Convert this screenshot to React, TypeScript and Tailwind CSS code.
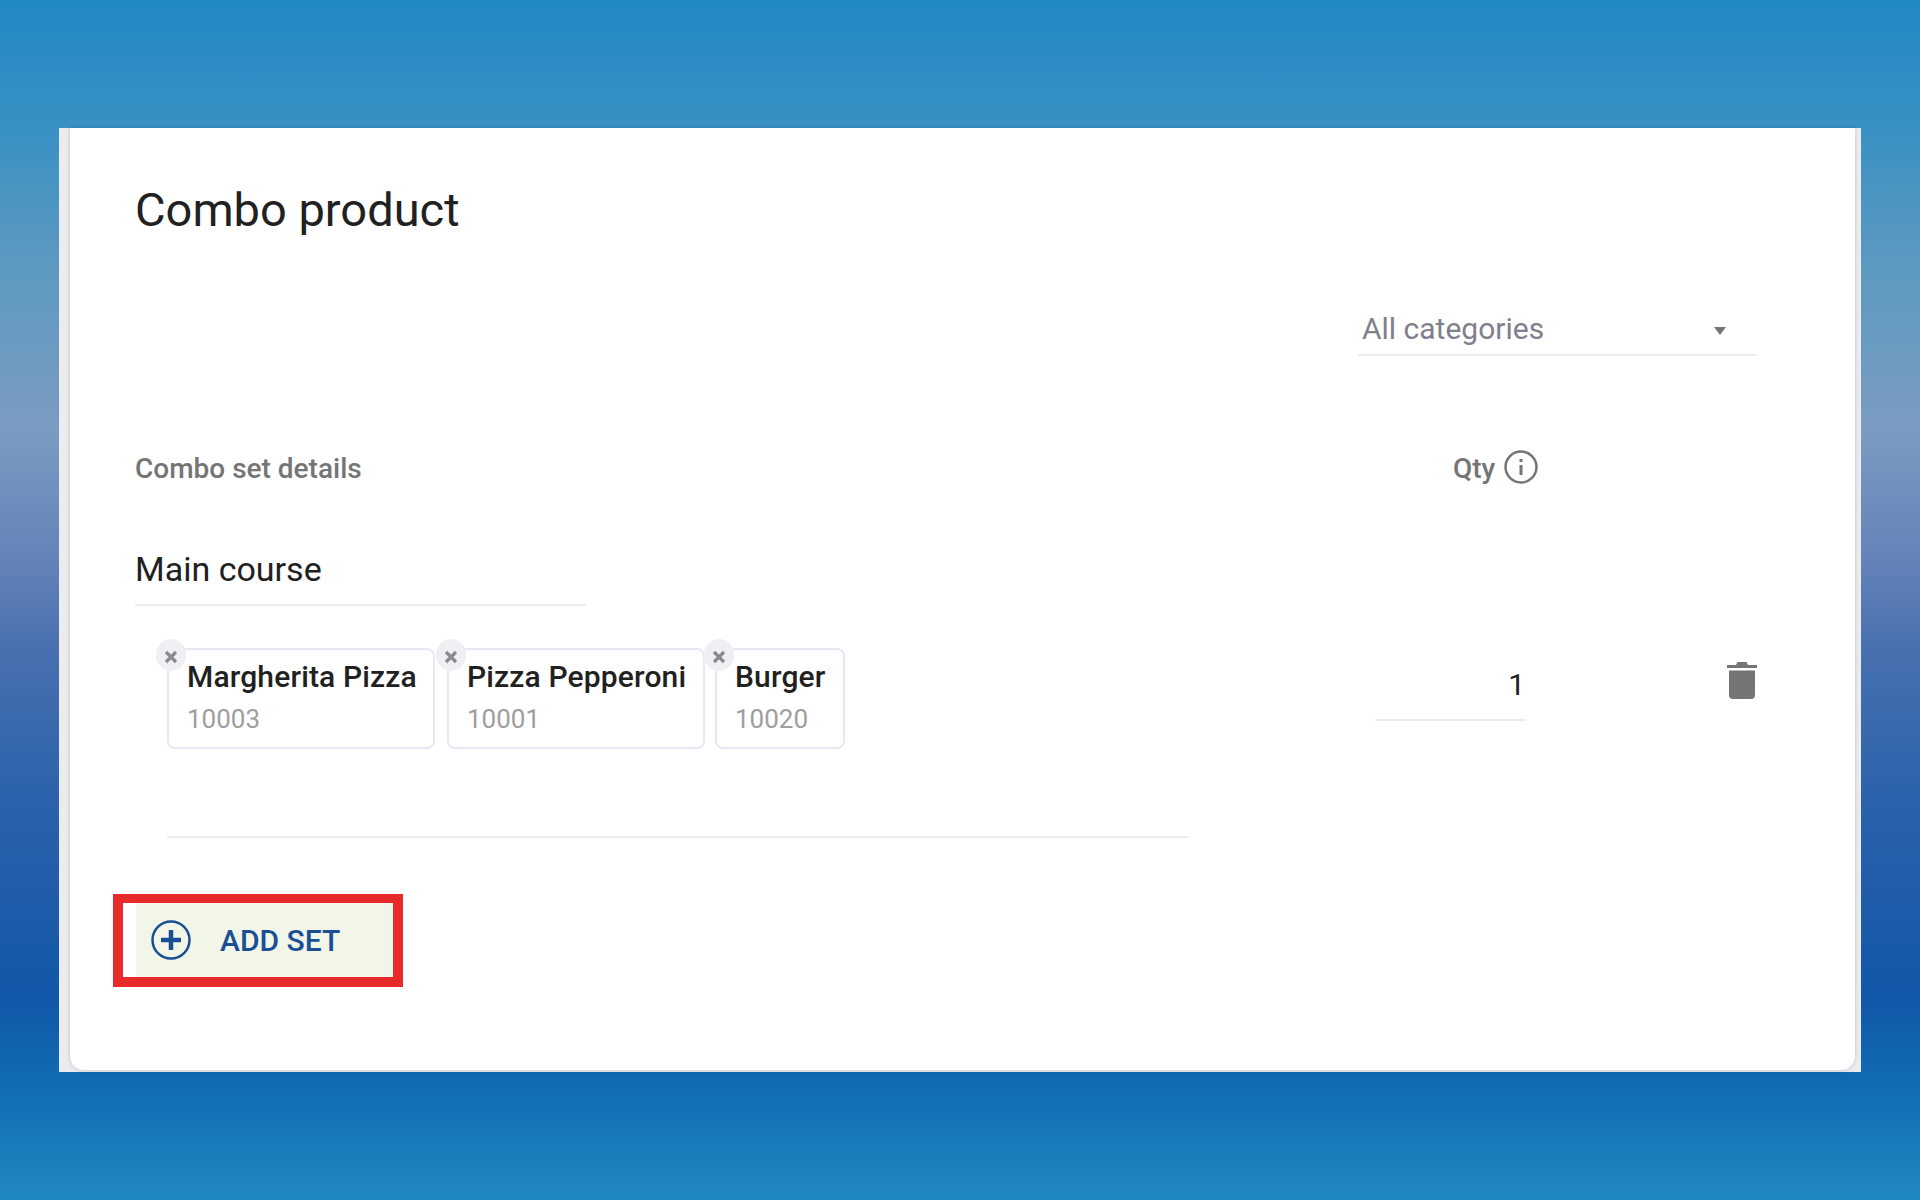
import React from 'react';

const chips = [
  { name: 'Margherita Pizza', code: '10003', w: 'w-[268px]' },
  { name: 'Pizza Pepperoni', code: '10001', w: 'w-[258px]' },
  { name: 'Burger', code: '10020', w: 'w-[130px] -ml-[2px]' },
];

const Chip = ({ name, code, w }: { name: string; code: string; w: string }) => (
  <div className={`relative h-[101px] ${w} rounded-[8px] border-2 border-[#e8e8f5] pl-[18px] pt-[9px]`}>
    <div className="absolute -left-[13px] -top-[11px] flex h-[32px] w-[30px] items-center justify-center rounded-full bg-[#eef0f4] pt-[3px]">
      <svg width="14" height="14" viewBox="0 0 14 14"><path d="M2 2 L12 12 M12 2 L2 12" stroke="#8a8a8a" strokeWidth="3.2" /></svg>
    </div>
    <div className="text-[30px] leading-[36px] font-medium tracking-[0.15px] text-[#212121]">{name}</div>
    <div className="mt-[9px] text-[26px] leading-[30px] text-[#9e9e9e]">{code}</div>
  </div>
);

export default function App() {
  return (
    <div className="h-[1200px] w-[1920px] overflow-hidden pt-[128px] pl-[59px] font-['Roboto',sans-serif] bg-[linear-gradient(180deg,#2089c4_0px,#3a91c4_130px,#5f9abf_280px,#7b9bc1_430px,#6483b8_560px,#4870b0_650px,#2b62ab_800px,#1157a9_1000px,#1170b4_1100px,#2088c0_1200px)]">
      <div className="h-[944px] w-[1802px] bg-[#ebecf0] pr-[6px] pl-[11px]">
        <div className="h-[942px] rounded-b-[14px] bg-white pt-[54px] pr-[98px] pl-[65px] shadow-[0_0_4px_rgba(0,0,0,0.18)]">
          <h1 className="text-[47px] leading-[56px] font-normal text-[#212121]">Combo product</h1>

          <div className="mt-[62px] flex justify-end">
            <div className="flex h-[56px] w-[399px] items-center justify-between border-b-2 border-[#ececec] pt-[2px] pr-[31px] pl-[4px]">
              <span className="text-[30px] text-[#80808c]">All categories</span>
              <span className="mt-[6px] h-0 w-0 border-x-[6px] border-t-[8px] border-x-transparent border-t-[#757575]" />
            </div>
          </div>

          <div className="mt-[92px] flex items-center text-[28px] font-medium text-[#757575]">
            <span className="w-[1318px]">Combo set details</span>
            <span>Qty</span>
            <svg className="-mt-[5px] ml-[9px]" width="34" height="34" viewBox="0 0 34 34" fill="none" stroke="#757575" strokeWidth="2.5">
              <circle cx="17" cy="17" r="15.5" />
              <path d="M17 15 V25 M17 9 V12" strokeWidth="3" />
            </svg>
          </div>

          <div className="mt-[59px] h-[57px] w-[451px] border-b-2 border-[#ececf2] text-[34px] leading-[40px] text-[#212121]">Main course</div>

          <div className="mt-[42px] flex items-start pl-[32px]">
            <div className="flex w-[1208px] gap-[12px]">
              {chips.map((c) => <Chip key={c.code} {...c} />)}
            </div>
            <div className="mt-[10px] h-[63px] w-[151px] border-b-2 border-[#ececec] pt-[9px] pr-[1px] text-right text-[30px] leading-[36px] text-[#212121]">1</div>
            <svg className="mt-[13px] ml-[201px]" width="30" height="38" viewBox="0 0 30 38" fill="#757575">
              <path d="M0 4 H9 L10.5 1 H19.5 L21 4 H30 V7 H0 Z" />
              <path d="M2 9.5 H28 V34 Q28 38 24 38 H6 Q2 38 2 34 Z" />
            </svg>
          </div>

          <div className="mt-[87px] ml-[32px] h-[2px] w-[1022px] bg-[#ececf2]" />

          <div className="relative mt-[65px] ml-[1px] flex h-[74px] w-[257px] items-center bg-[#f1f6e9] pl-[15px] text-[30px] font-medium text-[#1a4f96]">
            <svg width="40" height="40" viewBox="0 0 40 40" fill="none" stroke="#1a4f96">
              <circle cx="20" cy="20" r="18.5" strokeWidth="2.5" />
              <path d="M20 10 V30 M10 20 H30" strokeWidth="4.5" />
            </svg>
            <span className="ml-[29px]">ADD SET</span>
            <div className="absolute -top-[9px] -right-[10px] -bottom-[10px] -left-[23px] border-[10px] border-t-[9px] border-[#e82a2a]" />
          </div>
        </div>
      </div>
    </div>
  );
}
